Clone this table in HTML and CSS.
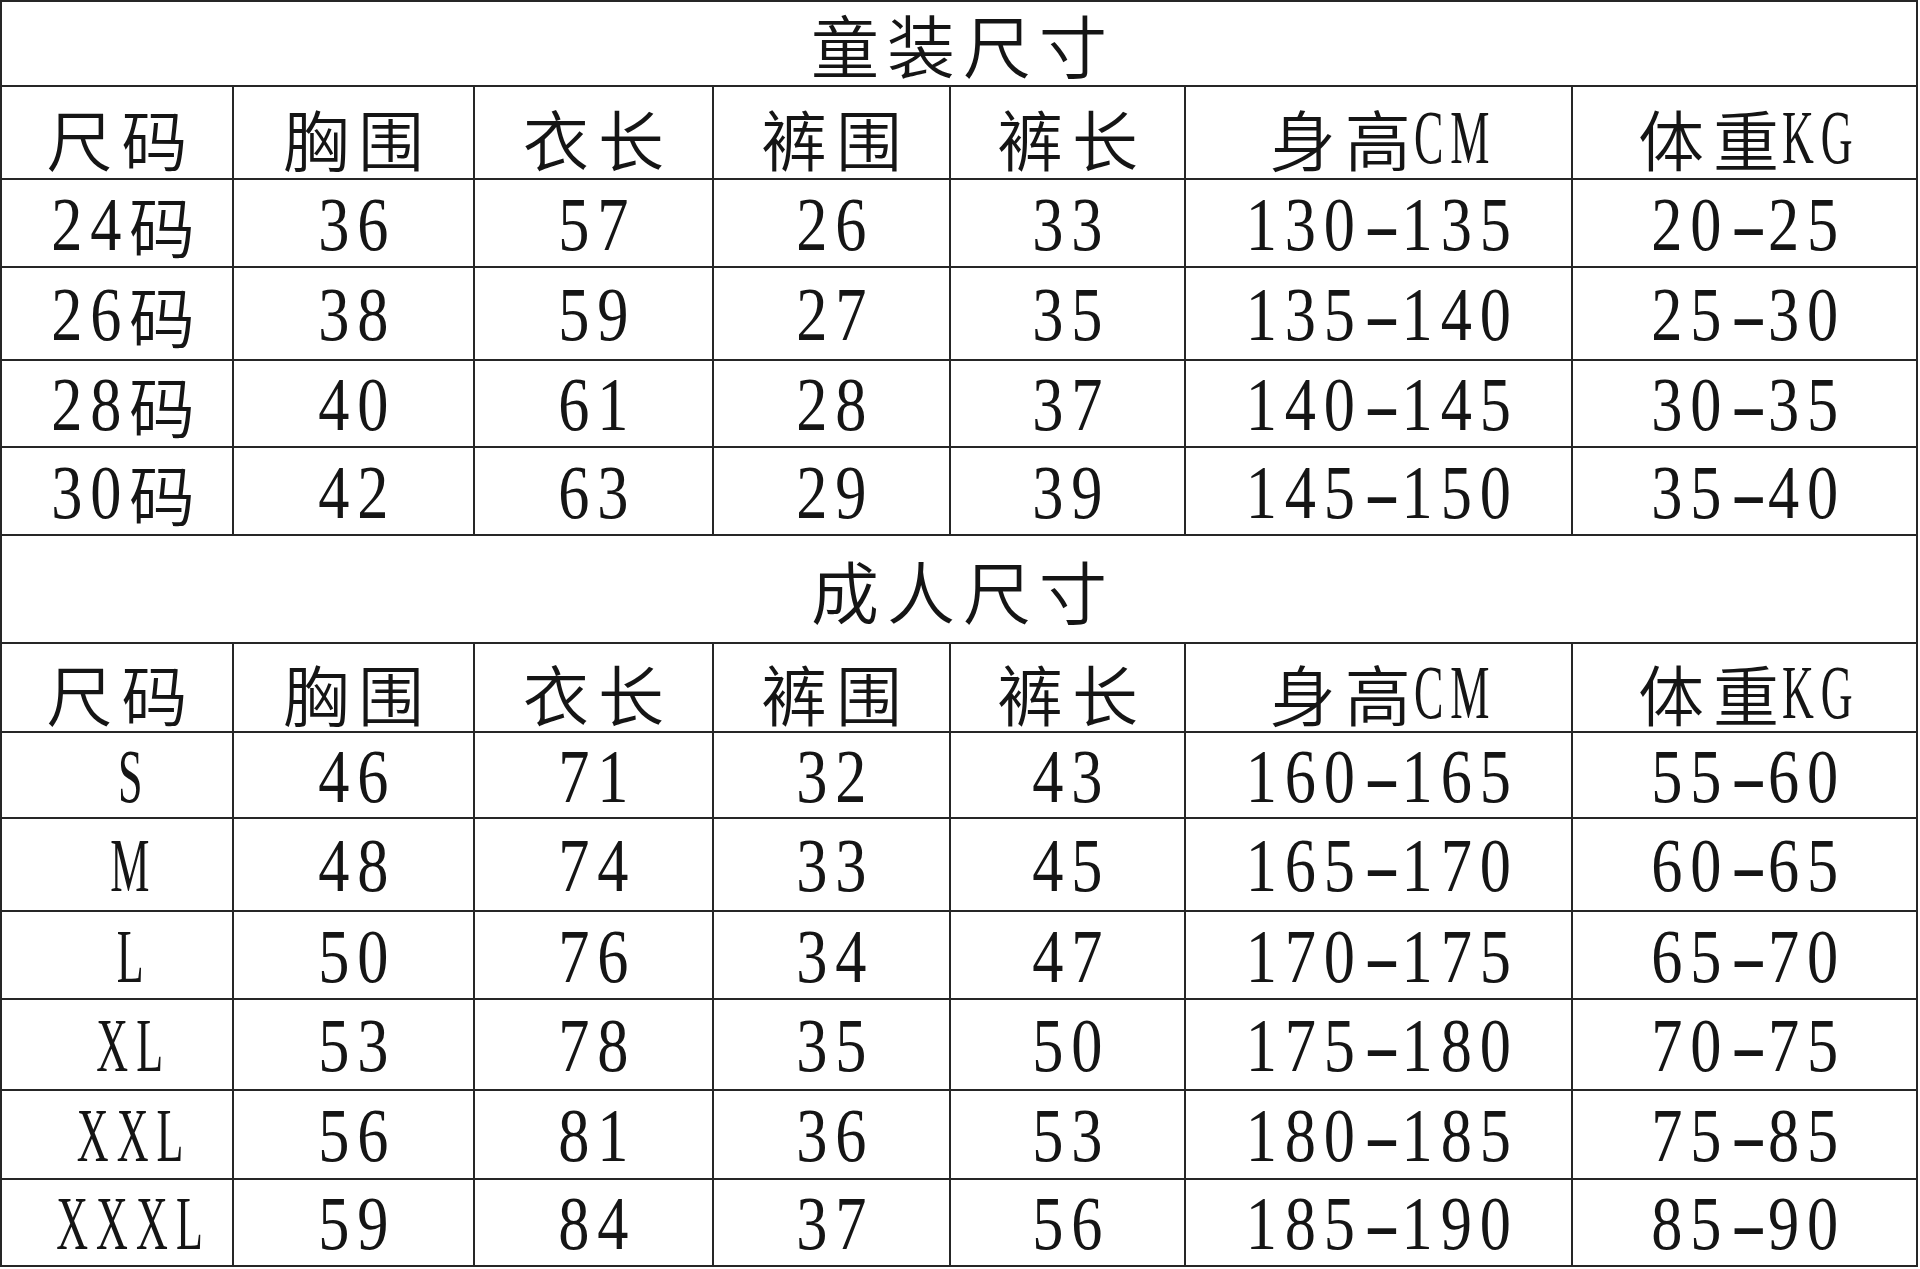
FILE: index.html
```html
<!DOCTYPE html>
<html lang="zh-CN">
<head>
<meta charset="utf-8">
<title>尺码表</title>
<link rel="stylesheet" href="styles.css">
</head>
<body>
<div class="sheet">
  <div class="cell title">童装尺寸</div>

  <div class="cell hd">尺码</div>
  <div class="cell hd">胸围</div>
  <div class="cell hd">衣长</div>
  <div class="cell hd">裤围</div>
  <div class="cell hd">裤长</div>
  <div class="cell hd"><span class="zh">身高</span><span class="lat cm">CM</span></div>
  <div class="cell hd"><span class="zh">体重</span><span class="lat kg">KG</span></div>

  <div class="cell c kid"><span class="n pre">24</span><span class="cjk">码</span></div>
  <div class="cell c"><span class="n">36</span></div>
  <div class="cell c"><span class="n">57</span></div>
  <div class="cell c"><span class="n">26</span></div>
  <div class="cell c"><span class="n">33</span></div>
  <div class="cell c"><span class="n">130<span class="dash">-</span>135</span></div>
  <div class="cell c"><span class="n">20<span class="dash">-</span>25</span></div>

  <div class="cell c kid"><span class="n pre">26</span><span class="cjk">码</span></div>
  <div class="cell c"><span class="n">38</span></div>
  <div class="cell c"><span class="n">59</span></div>
  <div class="cell c"><span class="n">27</span></div>
  <div class="cell c"><span class="n">35</span></div>
  <div class="cell c"><span class="n">135<span class="dash">-</span>140</span></div>
  <div class="cell c"><span class="n">25<span class="dash">-</span>30</span></div>

  <div class="cell c kid"><span class="n pre">28</span><span class="cjk">码</span></div>
  <div class="cell c"><span class="n">40</span></div>
  <div class="cell c"><span class="n">61</span></div>
  <div class="cell c"><span class="n">28</span></div>
  <div class="cell c"><span class="n">37</span></div>
  <div class="cell c"><span class="n">140<span class="dash">-</span>145</span></div>
  <div class="cell c"><span class="n">30<span class="dash">-</span>35</span></div>

  <div class="cell c kid"><span class="n pre">30</span><span class="cjk">码</span></div>
  <div class="cell c"><span class="n">42</span></div>
  <div class="cell c"><span class="n">63</span></div>
  <div class="cell c"><span class="n">29</span></div>
  <div class="cell c"><span class="n">39</span></div>
  <div class="cell c"><span class="n">145<span class="dash">-</span>150</span></div>
  <div class="cell c"><span class="n">35<span class="dash">-</span>40</span></div>

  <div class="cell title">成人尺寸</div>

  <div class="cell hd">尺码</div>
  <div class="cell hd">胸围</div>
  <div class="cell hd">衣长</div>
  <div class="cell hd">裤围</div>
  <div class="cell hd">裤长</div>
  <div class="cell hd"><span class="zh">身高</span><span class="lat cm">CM</span></div>
  <div class="cell hd"><span class="zh">体重</span><span class="lat kg">KG</span></div>

  <div class="cell c sz"><span class="lat solo">S</span></div>
  <div class="cell c"><span class="n">46</span></div>
  <div class="cell c"><span class="n">71</span></div>
  <div class="cell c"><span class="n">32</span></div>
  <div class="cell c"><span class="n">43</span></div>
  <div class="cell c"><span class="n">160<span class="dash">-</span>165</span></div>
  <div class="cell c"><span class="n">55<span class="dash">-</span>60</span></div>

  <div class="cell c sz"><span class="lat solo">M</span></div>
  <div class="cell c"><span class="n">48</span></div>
  <div class="cell c"><span class="n">74</span></div>
  <div class="cell c"><span class="n">33</span></div>
  <div class="cell c"><span class="n">45</span></div>
  <div class="cell c"><span class="n">165<span class="dash">-</span>170</span></div>
  <div class="cell c"><span class="n">60<span class="dash">-</span>65</span></div>

  <div class="cell c sz"><span class="lat solo">L</span></div>
  <div class="cell c"><span class="n">50</span></div>
  <div class="cell c"><span class="n">76</span></div>
  <div class="cell c"><span class="n">34</span></div>
  <div class="cell c"><span class="n">47</span></div>
  <div class="cell c"><span class="n">170<span class="dash">-</span>175</span></div>
  <div class="cell c"><span class="n">65<span class="dash">-</span>70</span></div>

  <div class="cell c sz"><span class="lat solo">XL</span></div>
  <div class="cell c"><span class="n">53</span></div>
  <div class="cell c"><span class="n">78</span></div>
  <div class="cell c"><span class="n">35</span></div>
  <div class="cell c"><span class="n">50</span></div>
  <div class="cell c"><span class="n">175<span class="dash">-</span>180</span></div>
  <div class="cell c"><span class="n">70<span class="dash">-</span>75</span></div>

  <div class="cell c sz"><span class="lat solo">XXL</span></div>
  <div class="cell c"><span class="n">56</span></div>
  <div class="cell c"><span class="n">81</span></div>
  <div class="cell c"><span class="n">36</span></div>
  <div class="cell c"><span class="n">53</span></div>
  <div class="cell c"><span class="n">180<span class="dash">-</span>185</span></div>
  <div class="cell c"><span class="n">75<span class="dash">-</span>85</span></div>

  <div class="cell c sz"><span class="lat solo">XXXL</span></div>
  <div class="cell c"><span class="n">59</span></div>
  <div class="cell c"><span class="n">84</span></div>
  <div class="cell c"><span class="n">37</span></div>
  <div class="cell c"><span class="n">56</span></div>
  <div class="cell c"><span class="n">185<span class="dash">-</span>190</span></div>
  <div class="cell c"><span class="n">85<span class="dash">-</span>90</span></div>
</div>
</body>
</html>
```

FILE: styles.css
```css
html, body {
  margin: 0;
  padding: 0;
  background: #ffffff;
}

.sheet {
  display: grid;
  grid-template-columns: 230px 239px 237px 235px 233px 385px 343px;
  grid-template-rows: 83px 91px 86px 91px 85px 86px 106px 87px 84px 91px 86px 89px 87px 85px;
  gap: 2px;
  padding: 2px;
  width: max-content;
  background: #262626;
}

.cell {
  background: #ffffff;
  display: flex;
  align-items: center;
  justify-content: center;
  white-space: nowrap;
  color: #151515;
  line-height: 1.2;
  min-width: 0;
}

.title {
  grid-column: 1 / -1;
  font-family: "Noto Sans CJK SC", sans-serif;
  font-weight: 350;
  font-size: 68px;
  letter-spacing: 8px;
  padding-left: 8px;
  padding-top: 1px;
}

.hd {
  font-family: "Noto Sans CJK SC", sans-serif;
  font-weight: 350;
  font-size: 66px;
  letter-spacing: 9px;
  padding-left: 9px;
  padding-top: 10px;
}

.c {
  font-family: "Liberation Serif", "Noto Sans CJK SC", serif;
  font-size: 76px;
  letter-spacing: 1px;
  padding-top: 3px;
}

.c.kid {
  padding-left: 12px;
}

.c.sz {
  padding-left: 26px;
}

.n {
  display: inline-block;
  letter-spacing: 9.6px;
  padding-left: 9.6px;
  transform: scaleX(0.82);
  transform-origin: center;
}

.n.pre {
  padding-left: 0;
  margin-left: -17px;
  transform-origin: right center;
}

.cjk {
  font-family: "Noto Sans CJK SC", sans-serif;
  font-weight: 350;
  font-size: 66px;
  letter-spacing: 0;
}

.dash {
  display: inline-block;
  letter-spacing: 0;
  margin: 0 11px;
  transform: scaleX(1.75);
}

.lat {
  display: inline-block;
  font-family: "Liberation Serif", serif;
  font-weight: 400;
  font-size: 76px;
  letter-spacing: 12px;
  transform: scaleX(0.58);
  transform-origin: left center;
}

.hd .lat {
  margin-left: -6px;
}

.lat.cm {
  margin-right: -60px;
}

.lat.kg {
  margin-right: -56px;
}

.lat.solo {
  letter-spacing: 14px;
  transform: scaleX(0.58);
  transform-origin: center;
  padding-left: 14px;
}
```
